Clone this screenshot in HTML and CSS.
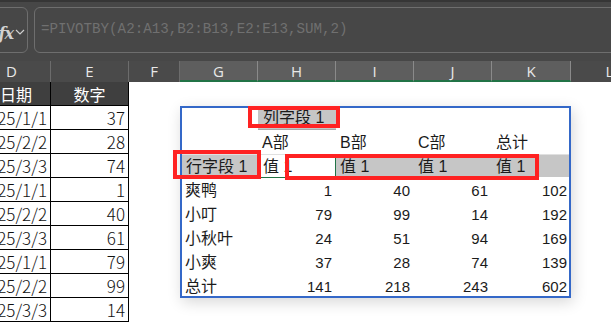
FILE: index.html
```html
<!DOCTYPE html>
<html lang="zh-CN">
<head>
  <meta charset="UTF-8" />
  <title>PIVOTBY</title>
  <link rel="stylesheet" href="styles.css">
</head>
<body>
  <div class="topbar">
    <div class="fxbox">
      <span class="fx">fx</span>
      <svg class="chev" width="10" height="6" viewBox="0 0 10 6"><path d="M1 1l4 4 4-4" fill="none" stroke="#cfcfcf" stroke-width="1.2"/></svg>
    </div>
    <div class="formula">=PIVOTBY(A2:A13,B2:B13,E2:E13,SUM,2)</div>
  </div>

  <div class="colheads">
    <div class="ch col-d">D</div>
    <div class="ch col-e">E</div>
    <div class="ch col-f">F</div>
    <div class="ch col-w sel">G</div>
    <div class="ch col-w sel">H</div>
    <div class="ch col-w sel">I</div>
    <div class="ch col-w sel">J</div>
    <div class="ch col-k sel">K</div>
    <div class="ch col-w">L</div>
  </div>

  <div class="sheet">
    <div class="src">
      <div class="c head d">日期</div><div class="c head">数字</div>
      <div class="c d">2025/1/1</div><div class="c n">37</div>
      <div class="c d">2025/2/2</div><div class="c n">28</div>
      <div class="c d">2025/3/3</div><div class="c n">74</div>
      <div class="c d">2025/1/1</div><div class="c n">1</div>
      <div class="c d">2025/2/2</div><div class="c n">40</div>
      <div class="c d">2025/3/3</div><div class="c n">61</div>
      <div class="c d">2025/1/1</div><div class="c n">79</div>
      <div class="c d">2025/2/2</div><div class="c n">99</div>
      <div class="c d">2025/3/3</div><div class="c n">14</div>
    </div>

    <div class="spacer"></div>

    <div class="pivot-wrap">
      <div class="pivot">
        <div class="p"></div><div class="p field">列字段 1</div><div class="p"></div><div class="p"></div><div class="p"></div>
        <div class="p"></div><div class="p">A部</div><div class="p">B部</div><div class="p">C部</div><div class="p">总计</div>
        <div class="p vrow lbl">行字段 1</div><div class="p active">值 1</div><div class="p vrow">值 1</div><div class="p vrow">值 1</div><div class="p vrow last">值 1</div>
        <div class="p lbl">爽鸭</div><div class="p num">1</div><div class="p num">40</div><div class="p num">61</div><div class="p num">102</div>
        <div class="p lbl">小叮</div><div class="p num">79</div><div class="p num">99</div><div class="p num">14</div><div class="p num">192</div>
        <div class="p lbl">小秋叶</div><div class="p num">24</div><div class="p num">51</div><div class="p num">94</div><div class="p num">169</div>
        <div class="p lbl">小爽</div><div class="p num">37</div><div class="p num">28</div><div class="p num">74</div><div class="p num">139</div>
        <div class="p lbl">总计</div><div class="p num">141</div><div class="p num">218</div><div class="p num">243</div><div class="p num">602</div>
      </div>

      <!-- annotation boxes -->
      <div class="mark mark-col"></div>
      <div class="mark mark-row"></div>
      <div class="mark mark-val"></div>
    </div>
  </div>
</body>
</html>
```

FILE: styles.css
```css
:root {
  --bar: #474747;
  --head: #4a4a4a;
  --head-sel: #5e5e5e;
  --green: #217346;
  --blue: #3468c8;
  --red: #ff2222;
  --gray-fill: #c6c6c6;
}
* {
  box-sizing: border-box;
}
body {
  margin: 0;
  width: 611px;
  height: 324px;
  overflow: hidden;
  background: #fff;
  font-family: "Liberation Sans", "Noto Sans CJK SC", sans-serif;
}

/* formula bar */
.topbar {
  display: flex;
  gap: 6px;
  height: 61px;
  padding-top: 7px;
  background: var(--bar);
  border-top: 2px solid #363636;
}
.fxbox {
  flex: 0 0 38px;
  margin-left: -10px;
  height: 46px;
  margin-top: -2px;
  border: 1px solid #6e6e6e;
  border-radius: 6px;
  display: flex;
  align-items: center;
  justify-content: flex-end;
  gap: 2px;
  padding-right: 2px;
}
.fx {
  font-family: "DejaVu Serif", serif;
  font-style: italic;
  font-weight: bold;
  font-size: 16px;
  letter-spacing: -1px;
  color: #d2d2d2;
  margin-top: 6px;
}
.chev {
  margin-top: 3px;
}
.formula {
  flex: 1;
  height: 46px;
  margin-top: -2px;
  margin-right: -20px;
  border: 1px solid #6e6e6e;
  border-radius: 6px;
  padding: 13px 0 0 6px;
  font-family: "Liberation Mono", monospace;
  font-size: 14.2px;
  color: #707070;
}

/* column headers */
.colheads {
  display: flex;
  height: 21px;
  background: var(--head);
  overflow: hidden;
}
.ch {
  flex: 0 0 auto;
  height: 21px;
  padding-top: 2px;
  text-align: center;
  font-family: "Open Sans", sans-serif;
  font-size: 15px;
  line-height: 17px;
  color: #e8e8e8;
  border-right: 1px solid #6c6c6c;
}
.ch.sel {
  background: var(--head-sel);
  border-bottom: 2px solid var(--green);
  border-right-color: #8a8a8a;
}
.col-d { width: 51px; padding-right: 27px; }
.col-e { width: 78px; }
.col-f { width: 51px; }
.col-w { width: 78px; }
.col-k { width: 79px; }

/* sheet body */
.sheet {
  display: flex;
  align-items: flex-start;
}
.src {
  display: grid;
  grid-template-columns: 51px 78px;
  grid-auto-rows: 24px;
  flex: 0 0 129px;
}
.c {
  border-right: 1px solid #000;
  border-bottom: 1px solid #000;
  overflow: hidden;
  white-space: nowrap;
  font-family: "Noto Sans CJK SC", sans-serif;
  font-weight: 300;
  font-size: 17px;
  line-height: 24px;
  color: #111;
  text-align: right;
  padding-right: 3px;
}
.c.d {
  direction: rtl;
}
.c.head {
  background: #3f3f3f;
  color: #fff;
  font-weight: 400;
  font-size: 16px;
  text-align: center;
  padding-right: 0;
}
.c.head.d {
  direction: ltr;
  padding-right: 27px;
}
.spacer {
  flex: 0 0 51px;
}

/* pivot result */
.pivot-wrap {
  position: relative;
  flex: 0 0 391px;
  padding-top: 24px;
}
.pivot {
  display: grid;
  grid-template-columns: 78px 78px 78px 78px 79px;
  grid-auto-rows: 24px;
  outline: 2px solid var(--blue);
  outline-offset: -2px;
  box-shadow: 2px 4px 14px rgba(0, 0, 0, 0.16);
  color: #1b1b1b;
  font-size: 16px;
}
.p {
  padding: 1px 4px 0;
  line-height: 23px;
  white-space: nowrap;
}
.p.lbl {
  padding-left: 5px;
}
.p.num {
  text-align: right;
  font-size: 15px;
}
.p.field {
  background: var(--gray-fill);
  border-bottom: 1px solid #a9a9a9;
  padding-left: 5px;
  line-height: 22px;
}
.p.vrow {
  background: var(--gray-fill);
  border-top: 1px solid #e0e0e0;
  border-bottom: 1px solid #fff;
  line-height: 21px;
}
.p.vrow.lbl {
  margin-left: 1px;
}
.p.vrow.last {
  margin-right: 2px;
}
.p.active {
  background: #fff;
  border: 1px solid var(--green);
  border-top-color: #e0e0e0;
  line-height: 21px;
}

/* red annotation frames */
.mark {
  position: absolute;
  border: 4px solid var(--red);
}
.mark-col {
  left: 68px;
  top: 24px;
  width: 92px;
  height: 22px;
}
.mark-row {
  left: -7px;
  top: 68px;
  width: 88px;
  height: 29px;
}
.mark-val {
  left: 105px;
  top: 72px;
  width: 254px;
  height: 26px;
}
```
